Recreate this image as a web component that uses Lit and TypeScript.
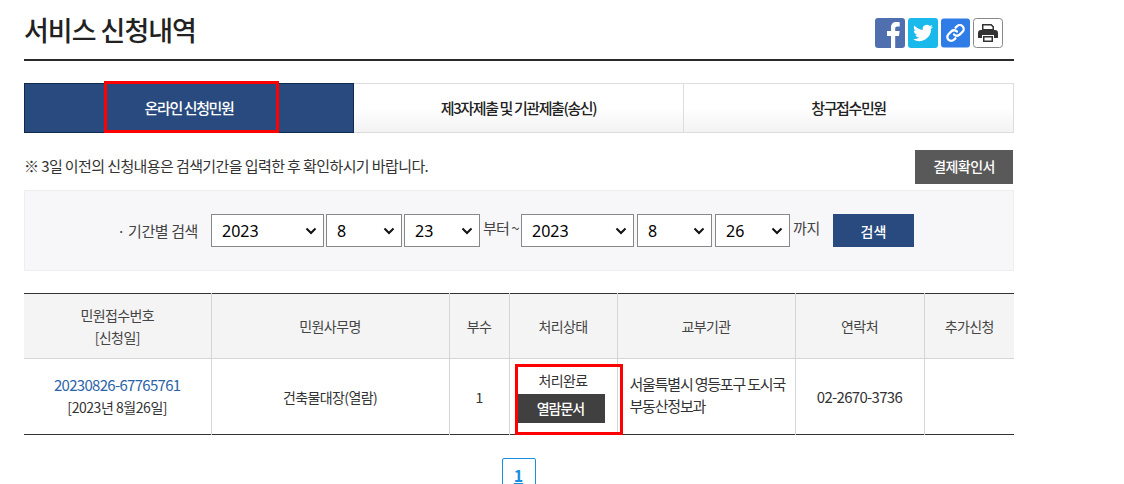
import { LitElement, html, css } from 'lit';
import { customElement } from 'lit/decorators.js';

const columns = [
  { label: ['민원접수번호', '[신청일]'], width: 187 },
  { label: ['민원사무명'], width: 238 },
  { label: ['부수'], width: 60 },
  { label: ['처리상태'], width: 108 },
  { label: ['교부기관'], width: 178 },
  { label: ['연락처'], width: 129 },
  { label: ['추가신청'], width: 90 },
];

const range = (from: number, to: number) =>
  Array.from({ length: to - from + 1 }, (_, i) => from + i);

@customElement('app-root')
export class AppRoot extends LitElement {
  static styles = css`
    :host {
      display: block;
      width: 1124px;
      height: 484px;
      overflow: hidden;
      background: #fff;
      font-family: 'Noto Sans CJK KR', 'Noto Sans', sans-serif;
      color: #333;
    }

    .page {
      position: relative;
      width: 990px;
      height: 484px;
      margin-left: 24px;
    }

    .title-row {
      display: flex;
      justify-content: space-between;
      height: 59px;
      border-bottom: 2px solid #2b2b2b;
    }

    h1 {
      margin: 10px 0 0;
      font-size: 27px;
      line-height: 40px;
      font-weight: 500;
      letter-spacing: -1px;
      color: #222;
    }

    .share {
      display: flex;
      gap: 3px;
      margin: 18px 11px 0 0;
    }

    .share svg {
      display: block;
      width: 30px;
      height: 30px;
    }

    .tabs {
      display: grid;
      grid-template-columns: repeat(3, 330px);
      height: 50px;
      margin-top: 22px;
    }

    .tab {
      display: flex;
      align-items: center;
      justify-content: center;
      padding-bottom: 2px;
      box-sizing: border-box;
      border: 1px solid #ddd;
      border-left: 0;
      background: linear-gradient(#fff 50%, #f3f3f3);
      font-size: 15px;
      font-weight: 500;
      letter-spacing: -1.4px;
      color: #222;
    }

    .tab.active {
      background: #284a7e;
      border: 1px solid #11294d;
      color: #fff;
    }

    .note-row {
      display: flex;
      align-items: center;
      justify-content: space-between;
      height: 34px;
      margin-top: 17px;
      font-size: 15px;
      letter-spacing: -0.6px;
      color: #333;
    }

    .note-row span {
      padding-bottom: 3px;
    }

    .confirm {
      width: 98px;
      height: 34px;
      margin-right: 1px;
      line-height: 33px;
      text-align: center;
      background: #595959;
      color: #fff;
      font-size: 14px;
      font-weight: 500;
      letter-spacing: -0.6px;
    }

    .search {
      display: flex;
      align-items: center;
      height: 81px;
      margin-top: 6px;
      padding-left: 91px;
      box-sizing: border-box;
      background: #f7f7f9;
      border: 1px solid #eee;
      font-size: 15px;
      color: #444;
    }

    .search .label {
      width: 95px;
      padding-left: 1px;
      box-sizing: border-box;
      letter-spacing: -0.4px;
    }

    .dates {
      display: flex;
      gap: 2px;
    }

    .dates.wide {
      gap: 3px;
    }

    .search select {
      height: 33px;
      margin: 0;
      padding: 0 20px 0 10px;
      box-sizing: border-box;
      appearance: none;
      background: #fff url("data:image/svg+xml,%3Csvg xmlns='http://www.w3.org/2000/svg' width='12' height='8'%3E%3Cpath d='M1.500 1.500 6 6l4.500-4.500' fill='none' stroke='%23111' stroke-width='2'/%3E%3C/svg%3E") no-repeat right 6px center;
      border: 1px solid #888;
      border-radius: 0;
      font-family: 'Noto Sans', sans-serif;
      font-size: 16px;
      color: #000;
    }

    .year { width: 113px; }
    .small { width: 76px; }
    .wide .small { width: 75px; }

    .sep {
      margin: -6px 1px 0 3px;
      width: 37px;
      white-space: nowrap;
      letter-spacing: -0.9px;
    }

    .sep.end {
      margin-right: 0;
      width: 27px;
      letter-spacing: -0.4px;
    }

    .search button {
      width: 81px;
      height: 33px;
      margin-left: 13px;
      padding: 0;
      border: 0;
      background: #284a7e;
      color: #fff;
      font-family: inherit;
      font-size: 14px;
      font-weight: 500;
    }

    table {
      width: 990px;
      margin-top: 22px;
      border-collapse: collapse;
      table-layout: fixed;
      border-top: 1px solid #333;
      border-bottom: 1px solid #333;
      font-size: 14px;
      letter-spacing: -0.6px;
    }

    th, td {
      box-sizing: border-box;
      padding: 0;
      text-align: center;
      border-left: 1px solid #d5d5d5;
      line-height: 22px;
      font-weight: 400;
    }

    th:first-child, td:first-child { border-left: 0; }

    th {
      height: 65px;
      padding-bottom: 1px;
      background: #f4f4f4;
      border-bottom: 1px solid #d5d5d5;
      color: #444;
    }

    td {
      height: 76px;
      color: #333;
    }

    th span { display: block; }

    .receipt {
      padding-bottom: 2px;
      letter-spacing: -0.45px;
    }

    .number {
      display: block;
      font-size: 15px;
      letter-spacing: -0.7px;
      color: #2a64a8;
    }

    .phone {
      font-size: 15px;
      letter-spacing: -0.7px;
    }

    .status-label {
      display: block;
      margin-top: -1px;
    }

    .view {
      display: block;
      width: 88px;
      height: 29px;
      line-height: 28px;
      margin: 3px 0 0 7px;
      background: #404040;
      color: #fff;
      font-weight: 500;
      letter-spacing: -1px;
    }

    .office {
      padding: 0 0 3px 12px;
      text-align: left;
      font-size: 15px;
      letter-spacing: -1.2px;
    }

    .pager {
      display: flex;
      justify-content: center;
      margin: 23px 0 0 -1px;
    }

    .pager a {
      width: 32px;
      height: 40px;
      text-align: center;
      border: 1px solid #1a8fe0;
      border-radius: 2px;
      color: #1a8fe0;
      font-size: 16px;
      font-weight: 700;
      line-height: 33px;
      text-decoration: underline;
      text-underline-offset: 1px;
    }

    .mark {
      position: absolute;
      box-sizing: border-box;
      border: 3px solid #f00;
      pointer-events: none;
    }

    .mark.tab-mark {
      left: 80px;
      top: 81px;
      width: 175px;
      height: 52px;
    }

    .mark.cell-mark {
      left: 491px;
      top: 364px;
      width: 108px;
      height: 71px;
    }
  `;

  private dateSelects(day: number, wide = false) {
    return html`
      <div class="dates ${wide ? 'wide' : ''}">
        <select class="year">
          ${range(2018, 2023).map(y => html`<option ?selected=${y === 2023}>${y}</option>`)}
        </select>
        <select class="small">
          ${range(1, 12).map(m => html`<option ?selected=${m === 8}>${m}</option>`)}
        </select>
        <select class="small">
          ${range(1, 31).map(d => html`<option ?selected=${d === day}>${d}</option>`)}
        </select>
      </div>
    `;
  }

  private shareIcons() {
    return html`
      <div class="share">
        <svg viewBox="0 0 30 30">
          <rect width="30" height="30" rx="3" fill="#4f6fae" />
          <path d="M16 30V18h-4v-5h4V9.500C16 5.800 18.200 4 21.400 4c1.500 0 2.900.1 3.300.2v4.200h-2.300c-1.800 0-2.200.9-2.200 2.100V13h4.400l-.6 5h-3.800v12z" fill="#fff" />
        </svg>
        <svg viewBox="0 0 30 30">
          <rect width="30" height="30" rx="3" fill="#1ab9ec" />
          <path d="M25 8.700c-.8.300-1.600.6-2.400.7.900-.5 1.500-1.300 1.800-2.300-.8.500-1.700.8-2.600 1a4.100 4.100 0 0 0-7 3.800C11.400 11.700 8.400 10 6.400 7.500c-1.100 1.900-.5 4.300 1.300 5.500-.7 0-1.300-.2-1.900-.5 0 2 1.400 3.700 3.300 4.100-.6.200-1.200.2-1.800.1.500 1.600 2 2.800 3.800 2.800A8.300 8.300 0 0 1 5 21.200 11.700 11.700 0 0 0 23 10.800c.8-.5 1.500-1.300 2-2.100z" fill="#fff" />
        </svg>
        <svg viewBox="0 0 30 30" style="width:29px">
          <rect width="30" height="30" rx="3" fill="#2f7ce6" />
          <g fill="none" stroke="#fff" stroke-width="2.400" stroke-linecap="round">
            <path d="M13.500 16.500a4 4 0 0 0 5.800.2l3-3a4 4 0 0 0-5.700-5.700l-1.500 1.500" />
            <path d="M16.500 13.500a4 4 0 0 0-5.800-.2l-3 3a4 4 0 0 0 5.700 5.700l1.500-1.500" />
          </g>
        </svg>
        <svg viewBox="0 0 30 30">
          <rect x=".5" y=".5" width="29" height="29" rx="3" fill="#fff" stroke="#888" />
          <path d="M9 6h9.500L21 8.500V12H9zM10.500 7.500V11h9V9.200L17.900 7.500z" fill="#333" />
          <path d="M8 12h14a3 3 0 0 1 3 3v5h-4v-3H9v3H5v-5a3 3 0 0 1 3-3z" fill="#333" />
          <path d="M10 18h10v6H10zM11.500 19.500v3h7v-3z" fill="#333" />
        </svg>
      </div>
    `;
  }

  render() {
    return html`
      <div class="page">
        <div class="title-row">
          <h1>서비스 신청내역</h1>
          ${this.shareIcons()}
        </div>

        <div class="tabs">
          <div class="tab active">온라인 신청민원</div>
          <div class="tab">제3자제출 및 기관제출(송신)</div>
          <div class="tab">창구접수민원</div>
        </div>

        <div class="note-row">
          <span>※ 3일 이전의 신청내용은 검색기간을 입력한 후 확인하시기 바랍니다.</span>
          <div class="confirm">결제확인서</div>
        </div>

        <div class="search">
          <span class="label">· 기간별 검색</span>
          ${this.dateSelects(23)}
          <span class="sep">부터 ~</span>
          ${this.dateSelects(26, true)}
          <span class="sep end">까지</span>
          <button>검색</button>
        </div>

        <table>
          <colgroup>
            ${columns.map(c => html`<col style="width:${c.width}px" />`)}
          </colgroup>
          <thead>
            <tr>
              ${columns.map(c => html`<th>${c.label.map(l => html`<span>${l}</span>`)}</th>`)}
            </tr>
          </thead>
          <tbody>
            <tr>
              <td class="receipt">
                <span class="number">20230826-67765761</span>
                [2023년 8월26일]
              </td>
              <td>건축물대장(열람)</td>
              <td>1</td>
              <td>
                <span class="status-label">처리완료</span>
                <span class="view">열람문서</span>
              </td>
              <td class="office">서울특별시 영등포구 도시국<br />부동산정보과</td>
              <td class="phone">02-2670-3736</td>
              <td></td>
            </tr>
          </tbody>
        </table>

        <div class="pager"><a>1</a></div>

        <div class="mark tab-mark"></div>
        <div class="mark cell-mark"></div>
      </div>
    `;
  }
}
